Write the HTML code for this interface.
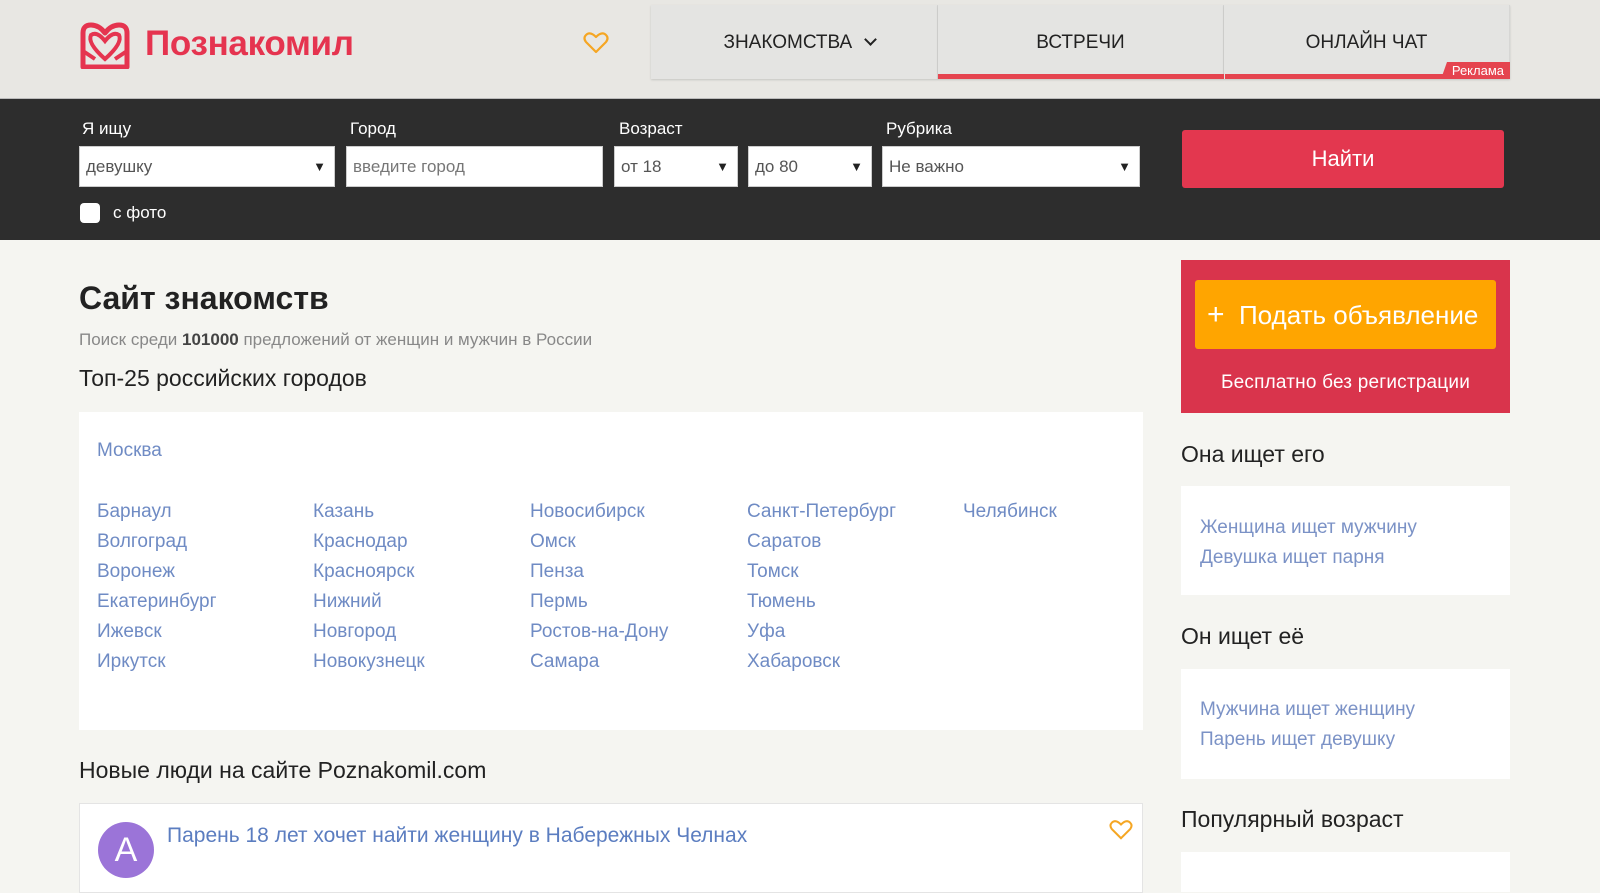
<!DOCTYPE html>
<html><head><meta charset="utf-8">
<style>
*{margin:0;padding:0;box-sizing:border-box}
body{width:1600px;height:879px;overflow:hidden;background:#f5f5f1;font-family:"Liberation Sans","DejaVu Sans",sans-serif;position:relative;color:#222}
.a{position:absolute;white-space:nowrap}
.hdr{position:absolute;left:0;top:0;width:1600px;height:99px;background:#e8e7e3;border-bottom:1px solid #bbb}
.tab{position:absolute;top:5px;height:74px;background:#e4e4e2;border-right:1px solid #d6d6d4;font-size:19px;color:#222;text-align:center;line-height:74px;box-shadow:0 1px 2px rgba(0,0,0,.15)}
.ul{position:absolute;top:74px;height:5px;background:#e5444f}
.bar{position:absolute;left:0;top:99px;width:1600px;height:141px;background:#2d2d2d}
.lbl{position:absolute;top:119px;color:#fff;font-size:17px}
.inp{position:absolute;top:146px;height:41px;background:#fff;border:1px solid #ccc;font-size:17px;color:#555;padding-left:6px;line-height:39px}
.inp .ar{position:absolute;right:8px;top:0;font-size:13px;color:#222}
.city{position:absolute;font-size:19px;color:#6f8bc4;white-space:nowrap}
.sb{position:absolute;font-size:19px;color:#7b92c6;white-space:nowrap}
</style></head><body>
<div class="hdr"></div>
<svg class="a" style="left:79px;top:21px" width="52" height="48" viewBox="0 0 52 48">
<path d="M4 46 V12 Q4 4 12 4 Q20 4 26 12 Q32 4 40 4 Q48 4 48 12 V46 Z" fill="none" stroke="#e5344f" stroke-width="5" stroke-linejoin="round"/>
<path d="M12 14 Q18 10 26 20 Q34 10 40 14 Q44 22 26 38 Q8 22 12 14Z" fill="none" stroke="#e5344f" stroke-width="4"/>
<path d="M4 30 L16 38 M48 30 L36 38" stroke="#e5344f" stroke-width="4"/>
</svg>
<div class="a" style="left:145px;top:24px;font-size:35px;font-weight:bold;color:#e5344f;letter-spacing:-0.3px">Познакомил</div>
<svg class="a" style="left:583px;top:31px" width="26" height="24" viewBox="0 0 26 24"><path d="M13 21 L3 11 Q0 7 3 4 Q7 0 13 6 Q19 0 23 4 Q26 7 23 11 Z" fill="none" stroke="#f5a623" stroke-width="2.2" stroke-linejoin="round"/></svg>
<div class="tab" style="left:651px;width:287px;padding-left:10px;line-height:76px">ЗНАКОМСТВА <span style="display:inline-block;width:9px;height:9px;border-right:2.5px solid #222;border-bottom:2.5px solid #222;transform:rotate(45deg);margin-left:8px;position:relative;top:-4px"></span></div>
<div class="tab" style="left:938px;width:286px;line-height:76px">ВСТРЕЧИ</div>
<div class="tab" style="left:1224px;width:286px;line-height:76px">ОНЛАЙН ЧАТ</div>
<div class="ul" style="left:938px;width:286px"></div>
<div class="ul" style="left:1225px;width:285px"></div>
<div class="a" style="left:1441px;top:62px;width:69px;height:17px;background:#e5444f;color:#fff;font-size:13px;line-height:17px;text-align:right;padding-right:6px;clip-path:polygon(6px 0,100% 0,100% 100%,0 100%)">Реклама</div>

<div class="bar"></div>
<div class="lbl" style="left:82px">Я ищу</div>
<div class="lbl" style="left:350px">Город</div>
<div class="lbl" style="left:619px">Возраст</div>
<div class="lbl" style="left:886px">Рубрика</div>
<div class="inp" style="left:79px;width:256px">девушку<span class="ar">▼</span></div>
<div class="inp" style="left:346px;width:257px;color:#777">введите город</div>
<div class="inp" style="left:614px;width:124px">от 18<span class="ar">▼</span></div>
<div class="inp" style="left:748px;width:124px">до 80<span class="ar">▼</span></div>
<div class="inp" style="left:882px;width:258px">Не важно<span class="ar">▼</span></div>
<div class="a" style="left:1182px;top:130px;width:322px;height:58px;background:#e3374f;border-radius:3px;color:#fff;font-size:22px;text-align:center;line-height:58px">Найти</div>
<div class="a" style="left:80px;top:203px;width:20px;height:20px;background:#fff;border-radius:4px"></div>
<div class="a" style="left:113px;top:203px;color:#fff;font-size:17px">с фото</div>

<div class="a" style="left:79px;top:280px;font-size:32px;font-weight:bold;color:#222">Сайт знакомств</div>
<div class="a" style="left:79px;top:330px;font-size:17px;color:#888">Поиск среди <b style="color:#444">101000</b> предложений от женщин и мужчин в России</div>
<div class="a" style="left:79px;top:365px;font-size:23px;color:#222">Топ-25 российских городов</div>
<div class="a" style="left:79px;top:412px;width:1064px;height:318px;background:#fff"></div>
<div class="city" style="left:97px;top:440px">Москва</div>
<div class="city" style="left:97px;top:497px;line-height:30px">Барнаул<br>Волгоград<br>Воронеж<br>Екатеринбург<br>Ижевск<br>Иркутск</div>
<div class="city" style="left:313px;top:497px;line-height:30px">Казань<br>Краснодар<br>Красноярск<br>Нижний<br>Новгород<br>Новокузнецк</div>
<div class="city" style="left:530px;top:497px;line-height:30px">Новосибирск<br>Омск<br>Пенза<br>Пермь<br>Ростов-на-Дону<br>Самара</div>
<div class="city" style="left:747px;top:497px;line-height:30px">Санкт-Петербург<br>Саратов<br>Томск<br>Тюмень<br>Уфа<br>Хабаровск</div>
<div class="city" style="left:963px;top:497px;line-height:30px">Челябинск</div>

<div class="a" style="left:79px;top:757px;font-size:23px;color:#222">Новые люди на сайте Poznakomil.com</div>
<div class="a" style="left:79px;top:803px;width:1064px;height:90px;background:#fff;border:1px solid #e4e4e4"></div>
<div class="a" style="left:98px;top:822px;width:56px;height:56px;border-radius:50%;background:#9b74d8;color:#fff;font-size:34px;text-align:center;line-height:56px">A</div>
<div class="a" style="left:167px;top:824px;font-size:21px;color:#5b7dc0">Парень 18 лет хочет найти женщину в Набережных Челнах</div>
<svg class="a" style="left:1109px;top:819px" width="24" height="22" viewBox="0 0 26 24"><path d="M13 21 L3 11 Q0 7 3 4 Q7 0 13 6 Q19 0 23 4 Q26 7 23 11 Z" fill="none" stroke="#f5a623" stroke-width="2.2"/></svg>

<div class="a" style="left:1181px;top:260px;width:329px;height:153px;background:#d9344c"></div>
<div class="a" style="left:1195px;top:280px;width:301px;height:69px;background:#ffa500;border-radius:3px;color:#fff;font-size:26px;line-height:69px;padding-left:12px"><span style="font-size:30px">+</span>&nbsp;&nbsp;Подать объявление</div>
<div class="a" style="left:1181px;top:372px;width:329px;text-align:center;color:#fff;font-size:19px;letter-spacing:0.2px">Бесплатно без регистрации</div>
<div class="a" style="left:1181px;top:441px;font-size:23px;color:#222">Она ищет его</div>
<div class="a" style="left:1181px;top:486px;width:329px;height:109px;background:#fff"></div>
<div class="sb" style="left:1200px;top:513px;line-height:30px">Женщина ищет мужчину<br>Девушка ищет парня</div>
<div class="a" style="left:1181px;top:623px;font-size:23px;color:#222">Он ищет её</div>
<div class="a" style="left:1181px;top:669px;width:329px;height:110px;background:#fff"></div>
<div class="sb" style="left:1200px;top:695px;line-height:30px">Мужчина ищет женщину<br>Парень ищет девушку</div>
<div class="a" style="left:1181px;top:806px;font-size:23px;color:#222">Популярный возраст</div>
<div class="a" style="left:1181px;top:852px;width:329px;height:40px;background:#fff"></div>
</body></html>
